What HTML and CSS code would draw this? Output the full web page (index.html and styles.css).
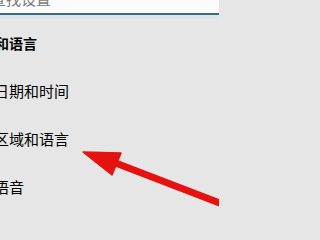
FILE: index.html
```html
<!DOCTYPE html>
<html lang="zh-CN">
<head>
<meta charset="utf-8">
<link rel="stylesheet" href="styles.css">
</head>
<body>
<div class="search"><span class="search-text">查找设置</span></div>
<div class="search-glow"></div>
<nav class="nav">
  <h2 class="nav-title">时间和语言</h2>
  <a class="nav-item">日期和时间</a>
  <a class="nav-item">区域和语言</a>
  <a class="nav-item">语音</a>
</nav>
<svg class="arrow" width="219" height="226" viewBox="0 0 219 226">
  <line x1="113" y1="162" x2="225" y2="205" stroke="#e5120f" stroke-width="7" stroke-linecap="butt"/>
  <polygon points="83,152 121,153 112,175" fill="#e5120f" stroke="#e5120f" stroke-width="1.5" stroke-linejoin="round"/>
</svg>
</body>
</html>
```
FILE: styles.css
```css
html, body {
  margin: 0;
  padding: 0;
}
body {
  width: 219px;
  height: 226px;
  overflow: hidden;
  background: #e6e6e6;
  font-family: "Noto Sans CJK SC", "Noto Sans", sans-serif;
  position: relative;
}
.search {
  height: 13px;
  background: #fdfcfd;
  border-bottom: 2px solid #3c6d85;
  overflow: hidden;
}
.search-text {
  display: block;
  margin-top: -9px;
  margin-left: -9px;
  font-size: 15px;
  line-height: 15px;
  color: #7a7a7a;
  white-space: nowrap;
}
.search-glow {
  height: 4px;
  background: #dde5e9;
}
.nav {
  display: flex;
  flex-direction: column;
}
.nav-title {
  margin: 0;
  padding-top: 14px;
  margin-left: -33px;
  font-size: 14px;
  line-height: 20px;
  font-weight: bold;
  color: #000;
  white-space: nowrap;
}
.nav-item {
  display: block;
  margin-left: -6px;
  font-size: 15px;
  line-height: 48px;
  height: 48px;
  color: #000;
  white-space: nowrap;
}
.nav-title + .nav-item {
  margin-top: 14px;
}
.arrow {
  position: absolute;
  left: 0;
  top: 0;
}
```
